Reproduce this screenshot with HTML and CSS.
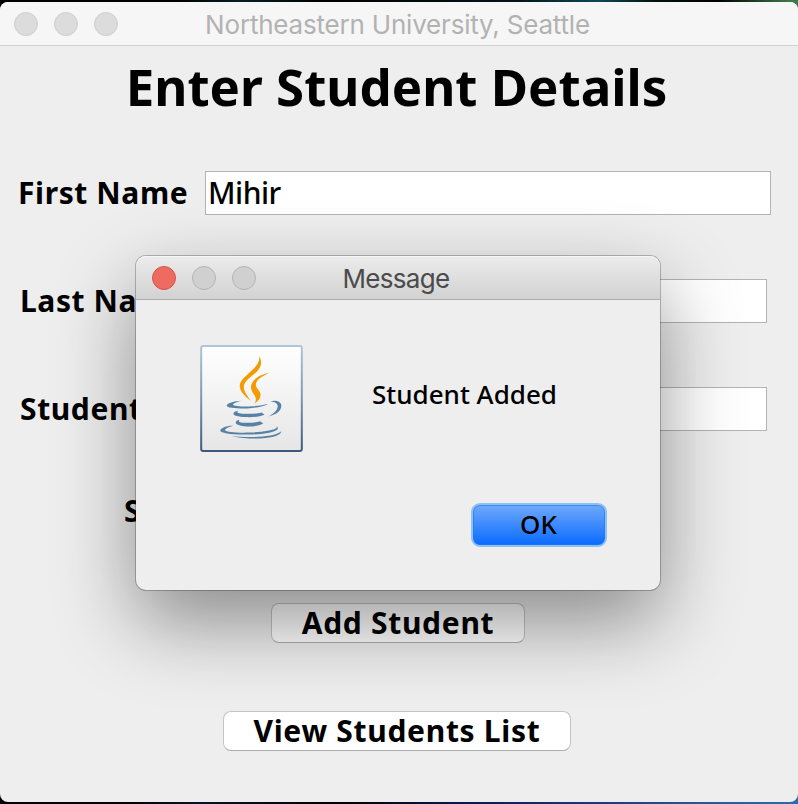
FILE: index.html
```html
<!DOCTYPE html>
<html lang="en">
<head>
<meta charset="utf-8">
<title>Northeastern University, Seattle</title>
<link rel="stylesheet" href="styles.css">
</head>
<body>
<main class="window">
  <header class="titlebar">
    <span class="dot"></span><span class="dot"></span><span class="dot"></span>
    <span class="caption">Northeastern University, Seattle</span>
  </header>
  <h1 class="heading">Enter Student Details</h1>
  <div class="row first"><label class="label">First Name</label><div class="field">Mihir</div></div>
  <div class="row"><label class="label">Last Name</label><div class="field"></div></div>
  <div class="row student"><label class="label">Student</label><div class="field"></div></div>
  <div class="row short"><label class="label">S</label></div>
  <div class="actions">
    <button class="btn add">Add Student</button>
    <button class="btn view">View Students List</button>
  </div>
</main>
<section class="dialog">
  <header class="titlebar dialog-bar">
    <span class="dot close"></span><span class="dot"></span><span class="dot"></span>
    <span class="caption">Message</span>
  </header>
  <div class="message">
    <svg class="java" viewBox="33 29 306 319" width="103" height="107">
      <defs>
        <linearGradient id="fill" x1="0" y1="0" x2="0" y2="1"><stop offset="0" stop-color="#fff"/><stop offset="1" stop-color="#e6e6e6"/></linearGradient>
        <linearGradient id="edge" x1="0" y1="0" x2="0" y2="1"><stop offset="0" stop-color="#b0c5dc"/><stop offset=".5" stop-color="#7d97b0"/><stop offset="1" stop-color="#3d5a7b"/></linearGradient>
      </defs>
      <rect x="36" y="32" width="300" height="313" rx="6" fill="url(#fill)" stroke="url(#edge)" stroke-width="6"/>
      <g fill="#f39b00">
        <path d="M209 62C217 78 217 91 205 105C190 121 169 133 164 148C160 162 171 178 184 195C164 181 150 166 151 149C153 132 172 120 189 103C203 89 211 78 209 62Z"/>
        <path d="M239 112C220 121 201 132 199 146C198 158 213 164 213 178C213 189 205 196 195 204C201 193 200 186 193 176C187 167 183 159 185 150C188 132 212 117 239 112Z"/>
      </g>
      <g fill="#5782a5">
        <path d="M155 195C141 199 130 204 131 207C133 211 158 213 180 212C204 211 219 208 236 205C222 212 200 217 174 218C144 219 112 216 112 210C112 202 135 196 155 195Z"/>
        <path d="M242 198C258 191 276 198 275 211C274 229 255 238 236 242C252 234 263 224 264 213C265 202 255 198 242 198Z"/>
        <path d="M146 225C139 231 148 234 170 234C190 235 205 233 216 230L225 237C209 243 188 245 169 244C145 243 132 239 132 234C132 229 138 226 146 225Z"/>
        <path d="M150 252C145 259 154 261 174 261C190 261 202 259 212 256L221 263C208 270 190 273 172 272C151 271 139 266 139 261C139 256 143 253 150 252Z"/>
        <path d="M132 270C118 274 106 279 107 283C110 289 144 291 180 290C216 289 248 284 257 279C262 276 262 274 260 272C267 275 265 280 260 283C247 291 213 296 174 296C128 297 93 292 93 284C94 276 113 269 132 270Z"/>
        <path d="M126 300C176 306 253 305 275 286C272 309 187 314 126 300Z"/>
      </g>
    </svg>
    <p class="text">Student Added</p>
  </div>
  <div class="dialog-actions"><button class="ok">OK</button></div>
</section>
</body>
</html>
```
FILE: styles.css
```css
* { box-sizing: border-box; }
body {
  margin: 0;
  width: 798px;
  height: 804px;
  padding: 2px 0;
  overflow: hidden;
  position: relative;
  background:
    linear-gradient(90deg, #000 0 15%, #07142b 25%, #000 42%, #0a1a55 60%, #2a5a9c 90%, #2b6bb0) 0 100% / 100% 20px no-repeat,
    linear-gradient(90deg, #000 0 22%, #042022 30%, #000 40%, #04151a 65%, #0b4a55 75%, #02120f 82%, #000 90%, #3c7a4a 99%) 0 0 / 100% 20px no-repeat,
    #000;
  font-family: "Noto Sans", sans-serif;
  color: #000;
}
.window {
  height: 800px;
  background: #eee;
  border-radius: 8px;
  overflow: hidden;
}
.titlebar {
  display: flex;
  align-items: center;
  gap: 16px;
  height: 44px;
  padding-left: 14px;
  background: #f6f6f6;
  border-bottom: 1px solid #d0d0d0;
  position: relative;
}
.dot {
  width: 24px;
  height: 24px;
  border-radius: 50%;
  background: #dcdcdc;
  border: 1px solid #cecece;
}
.caption {
  position: absolute;
  inset: 0;
  display: flex;
  align-items: center;
  justify-content: center;
  padding: 3px 3px 0 0;
  font: 26px/1 Inter, sans-serif;
  letter-spacing: -.2px;
  color: #b2b2b2;
  white-space: nowrap;
}
.heading {
  margin: 0;
  height: 125px;
  padding: 5px 5px 0 0;
  font-size: 51px;
  line-height: 70px;
  text-align: center;
  white-space: nowrap;
}
.row {
  display: flex;
  align-items: center;
  height: 44px;
  margin-bottom: 64px;
  padding: 0 31px 0 20px;
}
.row.first { padding: 0 27px 0 18px; }
.row.short { height: 36px; margin: -2px 0 74px; padding-left: 124px; }
.label {
  width: 187px;
  flex: none;
  padding-bottom: 2px;
  font-size: 30px;
  font-weight: 700;
  letter-spacing: .6px;
  white-space: nowrap;
}
.field {
  flex: 1;
  height: 44px;
  padding-left: 2px;
  background: #fff;
  border: 1px solid #b3b3b3;
  font-size: 30px;
  font-weight: 500;
  letter-spacing: -.5px;
  line-height: 42px;
}
.actions {
  display: flex;
  flex-direction: column;
  align-items: center;
  gap: 68px;
}
.btn {
  height: 40px;
  padding: 0;
  border: 1px solid #c4c4c4;
  border-bottom-color: #adadad;
  border-radius: 8px;
  background: #fff;
  color: #000;
  font: 700 30px/38px "Noto Sans", sans-serif;
  letter-spacing: .7px;
  white-space: nowrap;
}
.add { width: 254px; margin-right: 2px; }
.view { width: 348px; margin-right: 4px; }
.dialog {
  position: absolute;
  left: 136px;
  top: 256px;
  width: 524px;
  height: 334px;
  border-radius: 10px;
  background: #eee;
  box-shadow: 0 0 0 1px rgba(0, 0, 0, .24), 0 32px 80px rgba(0, 0, 0, .42);
}
.dialog-bar {
  border-radius: 10px 10px 0 0;
  background: linear-gradient(#ececec, #d2d2d2);
  border-bottom-color: #adadad;
  box-shadow: inset 0 1px #f6f6f6;
  padding-left: 16px;
}
.dialog-bar .dot { background: #d0d0d0; border-color: #b4b4b4; }
.dialog-bar .close { background: #ed6b60; border-color: #d9534a; }
.dialog-bar .caption { color: #4b4b4b; letter-spacing: -.7px; padding-right: 4px; }
.message {
  display: flex;
  align-items: flex-start;
  gap: 69px;
  height: 203px;
  padding: 45px 0 0 64px;
}
.text {
  margin: 30px 0 0;
  font-size: 26px;
  font-weight: 500;
  line-height: 38px;
  white-space: nowrap;
}
.dialog-actions {
  display: flex;
  justify-content: flex-end;
  padding-right: 53px;
}
.ok {
  width: 136px;
  height: 44px;
  padding: 0 1px 2px 0;
  border: 2px solid #8fc0f2;
  border-radius: 9px;
  background: linear-gradient(#6fa9fb, #0a6bff);
  box-shadow: inset 0 0 0 1px rgba(30, 120, 240, .6);
  color: #000;
  font: 500 26px/38px "Noto Sans", sans-serif;
}
```
